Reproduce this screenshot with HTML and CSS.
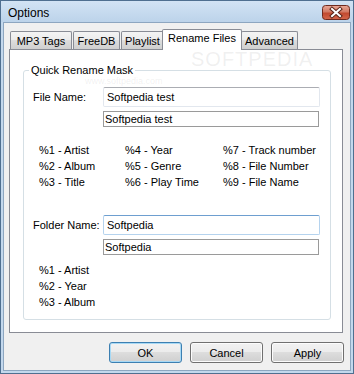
FILE: index.html
```html
<!DOCTYPE html>
<html>
<head>
    <title>Options</title>
    <meta charset="utf-8">
    <link rel="stylesheet" href="styles.css">
</head>
<body>
    <div class="window">
        <div class="titlebar">
            <span class="title">Options</span>
            <svg class="close" width="28" height="15" viewBox="0 0 28 15">
                <defs>
                    <linearGradient id="red" x1="0" y1="0" x2="0" y2="1">
                        <stop offset="0" stop-color="#e9a998"/>
                        <stop offset="0.45" stop-color="#d27a64"/>
                        <stop offset="0.55" stop-color="#c14a30"/>
                        <stop offset="1" stop-color="#d4664a"/>
                    </linearGradient>
                </defs>
                <rect x="0.5" y="0.5" width="27" height="14" rx="3" fill="url(#red)" stroke="#6e2a1e"/>
                <path d="M10 4 L18 11 M18 4 L10 11" stroke="#5a2418" stroke-width="4" stroke-linecap="square"/>
                <path d="M10 4 L18 11 M18 4 L10 11" stroke="#ffffff" stroke-width="2" stroke-linecap="square"/>
            </svg>
        </div>
        <div class="client">
            <div class="tabs">
                <div class="tab tab-mp3">MP3 Tags</div>
                <div class="tab tab-freedb">FreeDB</div>
                <div class="tab tab-playlist">Playlist</div>
                <div class="tab tab-rename active">Rename Files</div>
                <div class="tab tab-advanced">Advanced</div>
            </div>
            <div class="panel">
                <fieldset class="group">
                    <legend>Quick Rename Mask</legend>
                    <div class="group-body">
                        <div class="row">
                            <label class="caption">File Name:</label>
                            <input class="edit" type="text" value="Softpedia test">
                        </div>
                        <div class="row sub">
                            <input class="preview" type="text" value="Softpedia test" readonly>
                        </div>
                        <div class="vars">
                            <span>%1 - Artist</span>
                            <span>%4 - Year</span>
                            <span>%7 - Track number</span>
                            <span>%2 - Album</span>
                            <span>%5 - Genre</span>
                            <span>%8 - File Number</span>
                            <span>%3 - Title</span>
                            <span>%6 - Play Time</span>
                            <span>%9 - File Name</span>
                        </div>
                        <div class="row folder">
                            <label class="caption">Folder Name:</label>
                            <input class="edit focused" type="text" value="Softpedia">
                        </div>
                        <div class="row sub">
                            <input class="preview" type="text" value="Softpedia" readonly>
                        </div>
                        <div class="vars vars-folder">
                            <span>%1 - Artist</span>
                            <span>%2 - Year</span>
                            <span>%3 - Album</span>
                        </div>
                    </div>
                </fieldset>
            </div>
            <div class="buttons">
                <button class="btn default">OK</button>
                <button class="btn">Cancel</button>
                <button class="btn">Apply</button>
            </div>
        </div>
        <span class="watermark big">SOFTPEDIA</span>
        <span class="watermark small">www.softpedia.com</span>
    </div>
</body>
</html>
```

FILE: styles.css
```css
body {
    margin: 0;
    font-family: "Liberation Sans", Arial, sans-serif;
    font-size: 11px;
    color: #000;
}
.window {
    position: relative;
    width: 354px;
    height: 374px;
    box-sizing: border-box;
    border: 1px solid #4f6f90;
    background: #c3d8ed;
    display: flex;
    flex-direction: column;
}
.titlebar {
    height: 21px;
    display: flex;
    align-items: flex-start;
    justify-content: space-between;
    padding: 0 3px 0 7px;
    background: linear-gradient(#d2e3f4, #bcd3ea);
}
.title {
    font-size: 12px;
    line-height: 14px;
    margin-top: 5px;
}
.close {
    margin-top: 4px;
    display: block;
}
.client {
    flex: 1;
    margin: 0 2px 2px;
    border: 1px solid #8da6c0;
    background: #f0f0f0;
    padding: 6px 7px 0 5px;
}
.tabs {
    display: flex;
    align-items: flex-end;
    height: 20px;
}
.tab {
    box-sizing: border-box;
    height: 18px;
    line-height: 16px;
    padding-top: 1px;
    text-align: center;
    border: 1px solid #898c95;
    border-bottom: none;
    border-radius: 2px 2px 0 0;
    background: linear-gradient(#f4f4f4 0%, #ebebeb 50%, #dddddd 50%, #cfcfcf 100%);
}
.tab-mp3 {
    width: 62px;
    margin-left: 1px;
}
.tab-freedb {
    width: 47px;
    margin-left: 1px;
}
.tab-playlist {
    width: 43px;
    margin-left: 1px;
}
.tab-rename {
    width: 80px;
    margin-left: -2px;
    margin-right: -1px;
}
.tab-advanced {
    width: 57px;
}
.tab.active {
    position: relative;
    z-index: 1;
    height: 21px;
    margin-bottom: -1px;
    padding-top: 0;
    background: #fff;
}
.panel {
    box-sizing: border-box;
    height: 284px;
    border: 1px solid #898c95;
    background: #fff;
    padding: 13px 11px 0 13px;
}
.group {
    margin: 0;
    padding: 0;
    min-width: 0;
    border: 1px solid #d5dfe5;
    border-radius: 3px;
}
.group legend {
    margin-left: 5px;
    padding: 0 2px;
    line-height: 14px;
}
.group-body {
    padding: 10px 10px 9px 9px;
}
.row {
    display: flex;
    align-items: center;
}
.caption {
    width: 70px;
}
.row.sub {
    margin-top: 4px;
    padding-left: 70px;
}
.row.folder {
    margin-top: 25px;
}
input {
    font-family: "Liberation Sans", Arial, sans-serif;
    font-size: 11px;
    color: #000;
    margin: 0;
    outline: none;
    box-sizing: border-box;
    background: #fff;
}
.edit {
    width: 217px;
    height: 20px;
    padding: 0 3px;
    border: 1px solid #e2e7ee;
    border-top-color: #abadb3;
    border-radius: 2px;
}
.edit.focused {
    border-color: #b5d3ee;
    border-top-color: #6e9fd0;
}
.preview {
    width: 216px;
    height: 16px;
    padding: 0 1px;
    border: 1px solid #9a9a9a;
    border-radius: 0;
}
.vars {
    margin-top: 15px;
    padding-left: 6px;
    display: grid;
    grid-template-columns: 86px 98px auto;
    line-height: 16px;
}
.vars-folder {
    margin-top: 7px;
    grid-template-columns: auto;
}
.buttons {
    display: flex;
    justify-content: flex-end;
    gap: 8px;
    margin-top: 9px;
    margin-right: -1px;
}
.btn {
    width: 73px;
    height: 21px;
    padding: 0;
    font-family: "Liberation Sans", Arial, sans-serif;
    font-size: 11px;
    color: #000;
    border: 1px solid #707070;
    border-radius: 3px;
    background: linear-gradient(#f2f2f2 0%, #ebebeb 50%, #dddddd 50%, #cfcfcf 100%);
    box-shadow: inset 0 0 0 1px #fcfcfc;
}
.btn.default {
    border-color: #3c7fb1;
    box-shadow: inset 0 0 0 1px #a7d9f5;
}
.watermark {
    position: absolute;
    color: rgba(160, 160, 160, 0.16);
    pointer-events: none;
}
.watermark.big {
    left: 190px;
    top: 51px;
    font-size: 20px;
    line-height: 14px;
    letter-spacing: 1px;
}
.watermark.small {
    left: 84px;
    top: 76px;
    font-size: 9px;
    line-height: 8px;
}
```
